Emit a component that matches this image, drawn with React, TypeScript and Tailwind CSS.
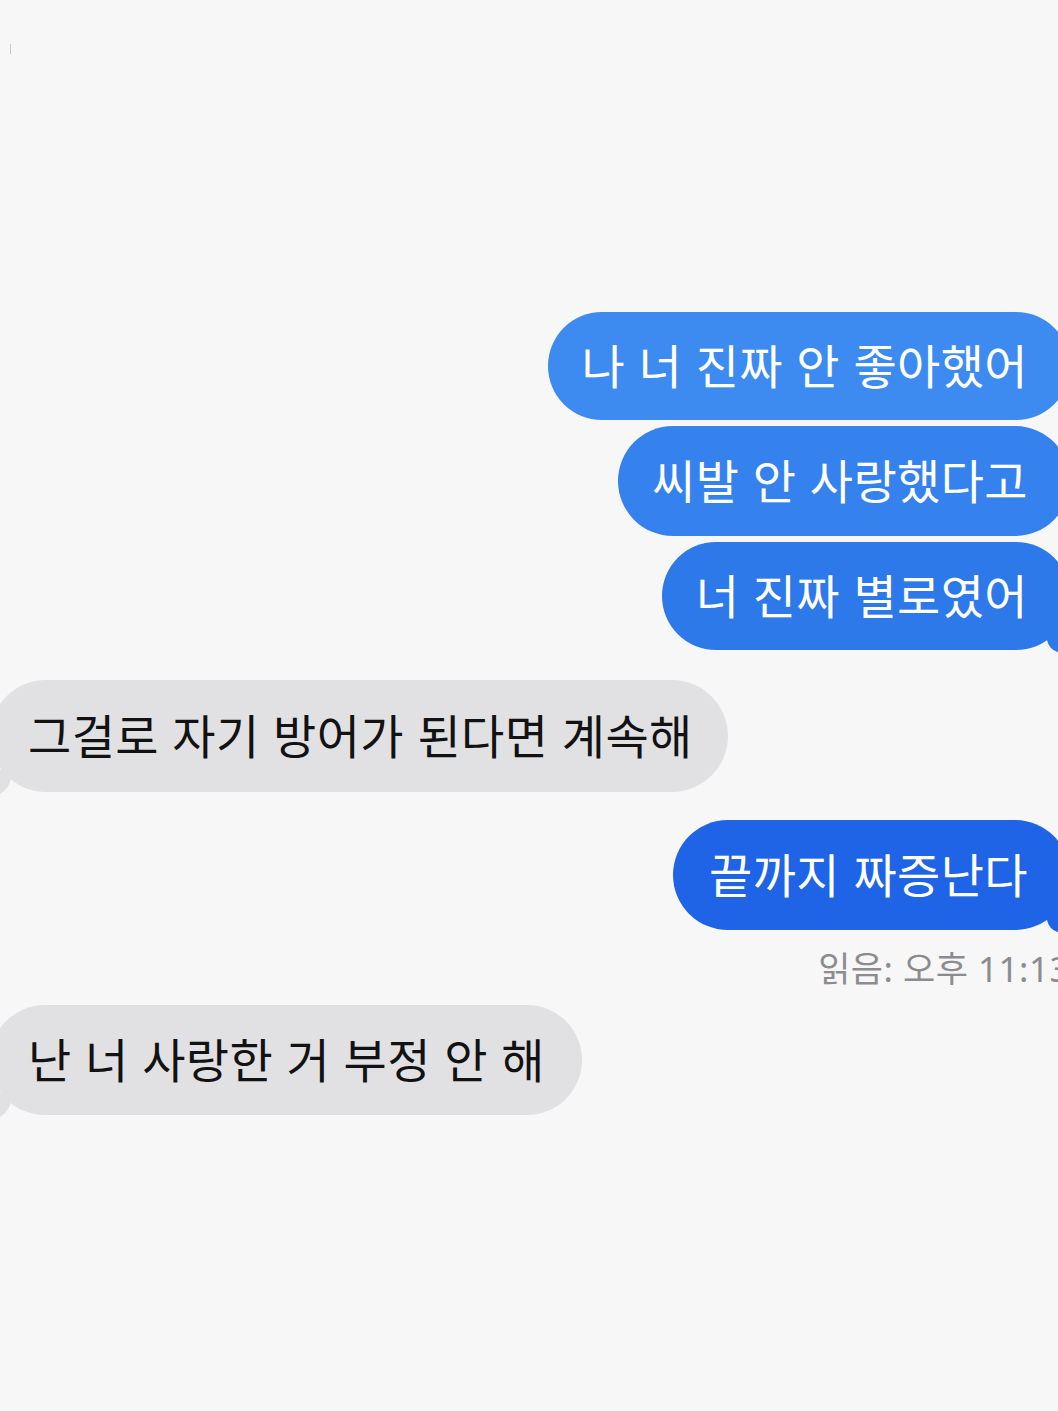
import React from "react";

const font = { fontFamily: '"Noto Sans CJK KR", "Noto Sans", sans-serif' };

function BlueTail({ color }: { color: string }) {
  return (
    <svg
      className="absolute right-0 bottom-[-4px]"
      width="30"
      height="24"
      viewBox="0 0 30 24"
    >
      <path d="M7 10 Q9 20 20 23 L30 23 L30 0 L7 0 Z" fill={color} />
    </svg>
  );
}

function GrayTail() {
  return (
    <svg
      className="absolute left-0 bottom-[-4px]"
      width="30"
      height="26"
      viewBox="0 0 30 26"
    >
      <path d="M21 8 Q19 20 8 25 L0 25 L0 0 L21 0 Z" fill="#e1e1e4" />
    </svg>
  );
}

const txt = "text-[47px] leading-none tracking-[0.4px] [word-spacing:2.5px] pb-[6px]";

export default function App() {
  return (
    <div
      className="relative w-[1058px] h-[1411px] overflow-hidden bg-[#f7f7f7] flex flex-col"
      style={font}
    >
      <div className="absolute left-[10px] top-[44px] w-[1px] h-[10px] bg-[#c8c8c8]" />

      <div className="h-[312px] shrink-0" />

      {/* Blue 1 */}
      <div className="relative self-end mr-[-12px] w-[522px] h-[108px] rounded-full bg-[#3d8bf0] flex items-center justify-end pr-[42px] text-white">
        <span className={txt}>나 너 진짜 안 좋아했어</span>
      </div>
      <div className="h-[6px] shrink-0" />
      <div className="relative self-end mr-[-12px] w-[452px] h-[110px] rounded-full bg-[#3582ee] flex items-center justify-end pr-[42px] text-white">
        <span className={txt}>씨발 안 사랑했다고</span>
      </div>
      <div className="h-[6px] shrink-0" />
      <div className="relative self-end mr-[-12px] w-[408px] h-[108px] rounded-full bg-[#2e79ea] flex items-center justify-end pr-[42px] text-white">
        <span className={txt}>너 진짜 별로였어</span>
        <BlueTail color="#2e79ea" />
      </div>

      <div className="h-[30px] shrink-0" />
      {/* Gray 1 */}
      <div className="relative self-start ml-[-10px] w-[738px] h-[112px] rounded-full bg-[#e1e1e4] flex items-center justify-start pl-[38px] text-[#121212]">
        <GrayTail />
        <span className={"relative " + txt}>그걸로 자기 방어가 된다면 계속해</span>
      </div>

      <div className="h-[28px] shrink-0" />
      {/* Blue 2 */}
      <div className="relative self-end mr-[-12px] w-[397px] h-[110px] rounded-full bg-[#1f64e6] flex items-center justify-end pr-[42px] text-white">
        <span className={txt}>끝까지 짜증난다</span>
        <BlueTail color="#1f64e6" />
      </div>

      <div
        className="self-end mr-[-12px] mt-[14px] h-[50px] flex items-center text-[35px] text-[#8c8c90] leading-none tracking-[0.5px] pb-[2px]"
        style={{ fontFamily: '"Noto Sans", "Noto Sans CJK KR", sans-serif' }}
      >
        읽음: 오후 11:13
      </div>

      <div className="h-[11px] shrink-0" />
      {/* Gray 2 */}
      <div className="relative self-start ml-[-10px] w-[592px] h-[110px] rounded-full bg-[#e1e1e4] flex items-center justify-start pl-[38px] text-[#121212]">
        <GrayTail />
        <span className={"relative " + txt}>난 너 사랑한 거 부정 안 해</span>
      </div>
    </div>
  );
}
